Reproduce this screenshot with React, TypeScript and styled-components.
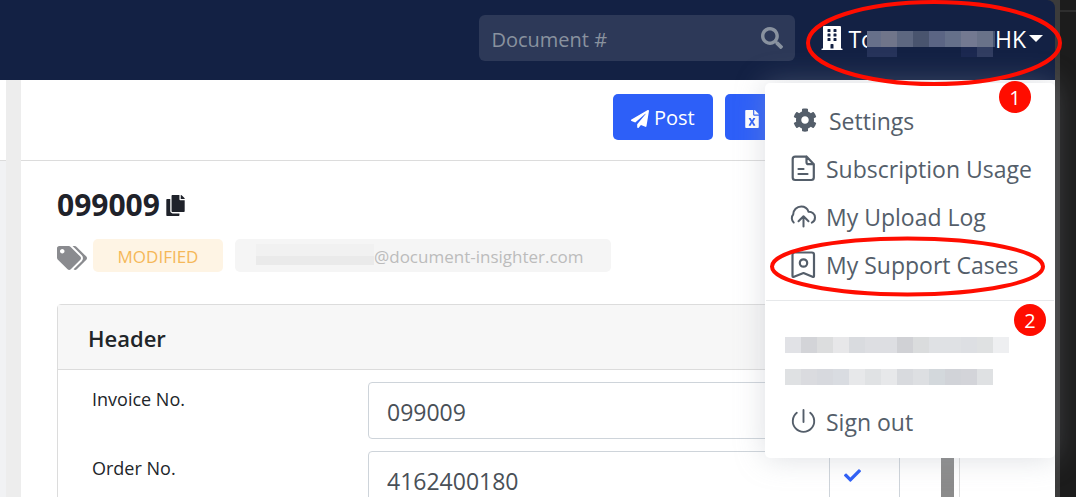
import React from "react";
import styled, { createGlobalStyle } from "styled-components";
import { FaBuilding, FaSearch, FaCog, FaPaperPlane, FaFileExcel, FaCopy, FaTags, FaCheck } from "react-icons/fa";

const GlobalStyle = createGlobalStyle`
  *, *::before, *::after { box-sizing: border-box; }
  body {
    margin: 0;
    font-family: "Open Sans", "Noto Sans", sans-serif;
    color: #212529;
    background: #1c1c1c;
  }
  button, input { font: inherit; }
`;

const Desktop = styled.div`
  position: relative;
  display: flex;
  height: 100vh;
  overflow: hidden;
  background: #1c1c1c;
`;

const Browser = styled.div`
  position: relative;
  flex: 1;
  min-width: 0;
  display: flex;
  flex-direction: column;
  background: #3b3b3b;
`;

const WindowEdge = styled.div`
  width: 5px;
  background: #3b3b3b;
`;

const Backdrop = styled.div`
  width: 16px;
  padding-top: 10px;
  background: #1c1c1c;

  &::before {
    content: "";
    display: block;
    height: 2px;
    background: #2e2e2e;
  }
`;

const Navbar = styled.header`
  display: flex;
  align-items: center;
  justify-content: flex-end;
  flex: none;
  height: 80px;
  padding: 0 12px 4px 0;
  gap: 25px;
  background: #132144;
  border-top-right-radius: 8px;
`;

const SearchBox = styled.form`
  display: flex;
  align-items: center;
  width: 316px;
  height: 46px;
  padding: 0 12px;
  border-radius: 6px;
  background: #2d3958;
  color: #89929f;
`;

const SearchInput = styled.input`
  flex: 1;
  min-width: 0;
  height: 46px;
  padding: 2px 0 0;
  border: 0;
  outline: 0;
  background: transparent;
  color: #ffffff;
  font-size: 20px;

  &::placeholder { color: #89929f; opacity: 1; }
`;

const IconButton = styled.button`
  display: flex;
  padding: 0;
  border: 0;
  background: transparent;
  color: inherit;
`;

const AccountButton = styled.button`
  display: flex;
  align-items: center;
  padding: 2px 0 0;
  border: 0;
  background: transparent;
  color: #ffffff;
  font-size: 23px;
  line-height: 32px;
`;

const AccountIcon = styled.span`
  display: flex;
  width: 28px;
  padding-bottom: 2px;
`;

const HiddenName = styled.span`
  display: flex;
  margin-left: -8px;
`;

const Caret = styled.span`
  margin: 0 0 2px 3px;
  border: 7px solid transparent;
  border-top-color: #ffffff;
  border-bottom: 0;
`;

const Mosaic = styled.span<{ $gap?: number }>`
  display: flex;
  height: 16px;
  margin-bottom: ${(p) => p.$gap ?? 0}px;
`;

const Tile = styled.span<{ $color: string; $width?: number; $trail?: string }>`
  width: ${(p) => p.$width ?? 16}px;
  height: 100%;
  background: ${(p) => p.$color};
  box-shadow: ${(p) => (p.$trail ? `0 10px 0 ${p.$trail}` : "none")};
`;

const Workspace = styled.div`
  display: flex;
  flex: 1;
  min-height: 0;
`;

const SideColumn = styled.aside`
  width: 6px;
  background: #f1f2f4;

  &::before {
    content: "";
    display: block;
    height: 81px;
    border-bottom: 1px solid #dcdcdc;
    background: #ffffff;
  }
`;

const Splitter = styled.div`
  width: 15px;
  background: #ededed;
`;

const Page = styled.main`
  flex: 1;
  min-width: 0;
  overflow: hidden;
  background: #ffffff;
`;

const Toolbar = styled.div`
  display: flex;
  align-items: flex-start;
  justify-content: flex-end;
  gap: 12px;
  height: 81px;
  padding: 14px 208px 0 0;
  border-bottom: 1px solid #dcdcdc;
`;

const ActionButton = styled.button<{ $width: number }>`
  display: flex;
  align-items: center;
  gap: 5px;
  width: ${(p) => p.$width}px;
  height: 46px;
  padding: 0 18px;
  border: 0;
  border-radius: 5px;
  background: #2d5ff8;
  color: #ffffff;
  font-size: 20px;
  white-space: nowrap;

  svg {
    flex: none;
    width: auto;
    height: 18px;
    margin-top: 4px;
  }
`;

const Content = styled.div`
  padding: 24px 95px 0 36px;
`;

const Title = styled.h1`
  display: flex;
  align-items: center;
  gap: 5px;
  margin: 0;
  font-size: 30px;
  font-weight: 700;
  line-height: 40px;
  color: #1f222a;
`;

const TagRow = styled.div`
  display: flex;
  align-items: center;
  height: 33px;
  margin: 14px 0 32px;
  color: #8a8b8f;

  > svg { margin-top: 4px; }
`;

const Tag = styled.span<{ $tone: "warn" | "muted" }>`
  display: flex;
  align-items: center;
  justify-content: ${(p) => (p.$tone === "warn" ? "center" : "flex-start")};
  width: ${(p) => (p.$tone === "warn" ? 130 : 376)}px;
  height: 33px;
  margin-left: ${(p) => (p.$tone === "warn" ? 6 : 12)}px;
  padding: 2px 21px 0;
  border-radius: 5px;
  background: ${(p) => (p.$tone === "warn" ? "#fef4e4" : "#f5f5f5")};
  color: ${(p) => (p.$tone === "warn" ? "#f5b859" : "#bcbcbc")};
  font-size: 17px;
  white-space: nowrap;
`;

const MaskedName = styled.span`
  width: 118px;
  height: 21px;
  margin-top: -4px;
  border-top: 12px solid #f1f1f1;
  background: #eaeaea;
`;

const Card = styled.section`
  border: 1px solid #dcdcdc;
  border-radius: 4px;
`;

const CardTitle = styled.h2`
  height: 65px;
  margin: 0;
  padding: 0 30px;
  border-bottom: 1px solid #dcdcdc;
  background: #f7f7f7;
  font-size: 22px;
  font-weight: 600;
  line-height: 66px;
`;

const CardBody = styled.div`
  display: flex;
  justify-content: space-between;
`;

const Fields = styled.div`
  display: flex;
  flex-direction: column;
  gap: 12px;
  flex: 1;
  padding: 12px 41px 12px 34px;
`;

const Field = styled.div`
  display: flex;
`;

const FieldLabel = styled.label`
  width: 276px;
  padding-top: 4px;
  font-size: 18px;
  line-height: 26px;
`;

const FieldInput = styled.input`
  flex: 1;
  min-width: 0;
  height: 57px;
  padding: 2px 18px 0;
  border: 1px solid #ced4da;
  border-radius: 4px 0 0 4px;
  outline: 0;
  color: #495057;
  font-size: 23px;
`;

const ConfirmButton = styled.button`
  display: flex;
  align-items: center;
  justify-content: flex-start;
  width: 70px;
  padding: 0 0 8px 14px;
  border: 1px solid #ced4da;
  border-left: 0;
  background: #ffffff;
  color: #2d5ff8;
`;

const ScrollTrack = styled.div`
  width: 18px;
  padding: 4px 5px 0 0;
`;

const ScrollThumb = styled.div`
  height: 100%;
  background: #8b8b8b;
`;

const Menu = styled.nav`
  position: absolute;
  top: 83px;
  right: 0;
  width: 290px;
  height: 375px;
  padding-top: 14px;
  border-radius: 5px;
  background: #ffffff;
  box-shadow: 0 0 30px rgba(154, 161, 171, 0.35);
`;

const MenuItem = styled.a`
  display: flex;
  align-items: center;
  height: 48px;
  padding-left: 25px;
  gap: 10px;
  color: #545e6a;
  font-size: 23px;
  line-height: 32px;
  text-decoration: none;
  white-space: nowrap;

  svg { flex: none; }
`;

const GearSlot = styled.span`
  display: flex;
  width: 29px;
  padding: 0 0 2px 3px;
`;

const Divider = styled.hr`
  height: 1px;
  margin: 11px 1px 36px;
  border: 0;
  background: #e6e8ea;
`;

const MaskedLines = styled.div`
  padding: 0 20px;
  margin-bottom: -3px;
`;

const Annotations = styled.svg`
  position: absolute;
  top: 0;
  right: 0;
  width: 320px;
  height: 310px;
  pointer-events: none;
`;

const Step = styled.span<{ $top: number; $right: number }>`
  position: absolute;
  top: ${(p) => p.$top}px;
  right: ${(p) => p.$right}px;
  width: 32px;
  height: 32px;
  border-radius: 50%;
  background: #ff0d00;
  color: #ffffff;
  font-size: 20px;
  line-height: 33px;
  text-align: center;
`;

const lineIcon = {
  width: 26,
  height: 28,
  viewBox: "0 0 26 28",
  fill: "none",
  stroke: "currentColor",
  strokeLinecap: "round" as const,
  strokeLinejoin: "round" as const,
};

const FileIcon = () => (
  <svg {...lineIcon} strokeWidth="2.200">
    <path d="M16.500 1.600H5.200a2.500 2.500 0 0 0-2.500 2.500V22.500a2.500 2.500 0 0 0 2.500 2.500h16.100a2.500 2.500 0 0 0 2.500-2.500V9.200L16.500 1.600V7.200a2 2 0 0 0 2 2h5.300M8.500 14h5M8.500 19h9" />
  </svg>
);

const CloudIcon = () => (
  <svg {...lineIcon} strokeWidth="2">
    <path d="M3.700 19.500C1.400 17.500 1.200 13.500 3.200 11.500 3.300 7 6.800 3.500 11.200 3.500c3.600 0 6.300 2.200 7.400 5.300 3.400-.2 6.400 2.200 6.400 5.700 0 2.300-1.200 4.300-3.200 5.200M13.500 23.500V13.500M8.500 18.300l5-5 5 5" />
  </svg>
);

const BookmarkIcon = () => (
  <svg {...lineIcon} strokeWidth="2.200">
    <path d="M4.700 1.500h17.100a2.200 2.200 0 0 1 2.200 2.200v21.200q0 1.600-1.500.9L13.500 22 4 25.800q-1.500.7-1.500-.9V3.700A2.200 2.200 0 0 1 4.700 1.500z" />
    <circle cx="13.500" cy="12" r="3.700" />
  </svg>
);

const PowerIcon = () => (
  <svg {...lineIcon} strokeWidth="1.900">
    <path d="M13.500 2v12M6.800 4.800a10.700 10.700 0 1 0 13.400 0" />
  </svg>
);

const accountTiles: Array<[string, number, string?]> = [
  ["#67708a", 14, "#26335a"],
  ["#70758a", 16, "#26335a"],
  ["#5d6780", 16],
  ["#49546e", 16],
  ["#5b6584", 16],
  ["#65708a", 16],
  ["#737991", 16, "#1b2850"],
  ["#697289", 16, "#313d61"],
  ["#465370", 2],
];

const maskedLines = [
  ["#e1e2e6", "#d3d4d8", "#dcddde", "#e7e7e9", "#d9dbdf", "#dddee2", "#dddee2", "#d0d1d5", "#dadcdd", "#dfe1e4", "#dfe1e4", "#dddfe3", "#dfe1e2", "#eeeff1"],
  ["#dfe1e3", "#dadbdf", "#d7d9de", "#d9dce1", "#e7e8ea", "#e0e2e4", "#e7e8ea", "#d8dade", "#dddfe2", "#d3d8dc", "#d1d3d8", "#d3d4d9", "#dfe1e3"],
];

const fields = [
  { id: "invoice", label: "Invoice No.", value: "099009" },
  { id: "order", label: "Order No.", value: "4162400180" },
];

export default function App() {
  return (
    <>
      <GlobalStyle />
      <Desktop>
        <Browser>
          <Navbar>
            <SearchBox>
              <SearchInput aria-label="Document number" placeholder="Document #" />
              <IconButton type="button" aria-label="Search">
                <FaSearch size={22} />
              </IconButton>
            </SearchBox>
            <AccountButton type="button" aria-label="Account menu">
              <AccountIcon>
                <FaBuilding size={24} />
              </AccountIcon>
              To
              <HiddenName>
                <Mosaic>
                  {accountTiles.map(([color, width, trail], i) => (
                    <Tile key={i} $color={color} $width={width} $trail={trail} />
                  ))}
                </Mosaic>
              </HiddenName>
              HK
              <Caret />
            </AccountButton>
          </Navbar>
          <Workspace>
            <SideColumn />
            <Splitter />
            <Page>
              <Toolbar>
                <ActionButton type="button" $width={100}>
                  <FaPaperPlane />
                  Post
                </ActionButton>
                <ActionButton type="button" $width={122}>
                  <FaFileExcel />
                  Export
                </ActionButton>
              </Toolbar>
              <Content>
                <Title>
                  099009
                  <FaCopy size={21} />
                </Title>
                <TagRow>
                  <FaTags size={30} />
                  <Tag $tone="warn">MODIFIED</Tag>
                  <Tag $tone="muted">
                    <MaskedName />
                    @document-insighter.com
                  </Tag>
                </TagRow>
                <Card>
                  <CardTitle>Header</CardTitle>
                  <CardBody>
                    <Fields>
                      {fields.map((f) => (
                        <Field key={f.id}>
                          <FieldLabel htmlFor={f.id}>{f.label}</FieldLabel>
                          <FieldInput id={f.id} defaultValue={f.value} />
                          <ConfirmButton type="button" aria-label={`Confirm ${f.label}`}>
                            <FaCheck size={17} />
                          </ConfirmButton>
                        </Field>
                      ))}
                    </Fields>
                    <ScrollTrack>
                      <ScrollThumb />
                    </ScrollTrack>
                  </CardBody>
                </Card>
              </Content>
            </Page>
          </Workspace>
          <Menu>
            <MenuItem href="#settings">
              <GearSlot>
                <FaCog size={24} />
              </GearSlot>
              Settings
            </MenuItem>
            <MenuItem href="#usage">
              <FileIcon />
              Subscription Usage
            </MenuItem>
            <MenuItem href="#uploads">
              <CloudIcon />
              My Upload Log
            </MenuItem>
            <MenuItem href="#cases">
              <BookmarkIcon />
              My Support Cases
            </MenuItem>
            <Divider />
            <MaskedLines>
              {maskedLines.map((line, i) => (
                <Mosaic key={i} $gap={16}>
                  {line.map((color, j) => (
                    <Tile key={j} $color={color} />
                  ))}
                </Mosaic>
              ))}
            </MaskedLines>
            <MenuItem href="#signout">
              <PowerIcon />
              Sign out
            </MenuItem>
          </Menu>
        </Browser>
        <WindowEdge />
        <Backdrop />
        <Annotations viewBox="0 0 320 310" fill="none" stroke="#ff0d00" strokeWidth="4">
          <ellipse cx="178" cy="43" rx="126" ry="41" />
          <ellipse cx="151.500" cy="266.500" rx="135.500" ry="28" />
        </Annotations>
        <Step $top={81} $right={45}>1</Step>
        <Step $top={304} $right={30}>2</Step>
      </Desktop>
    </>
  );
}
